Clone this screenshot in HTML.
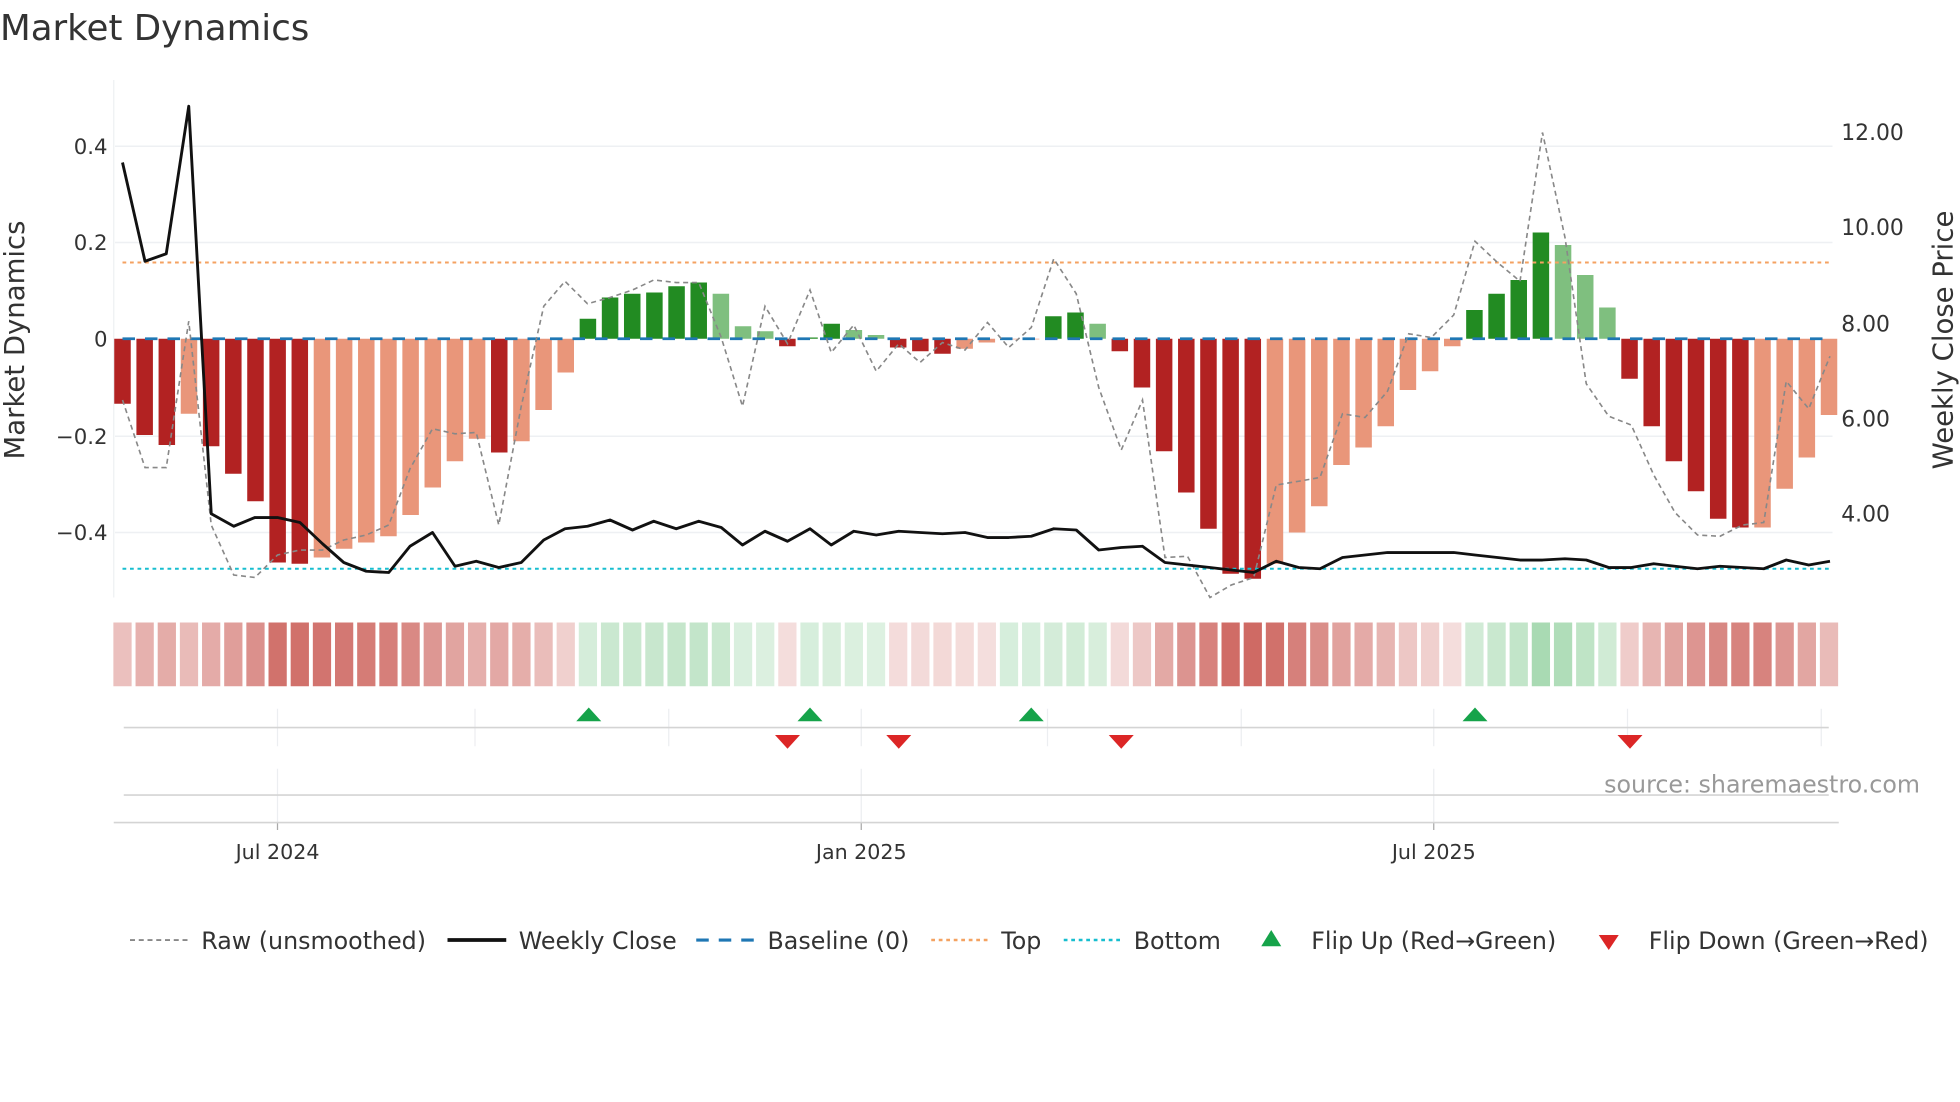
<!DOCTYPE html>
<html><head><meta charset="utf-8"><style>
html,body{margin:0;padding:0;background:#fff;}
svg{display:block;font-family:"DejaVu Sans","Liberation Sans",sans-serif;}
</style></head><body>
<svg id="s" width="1960" height="1102" viewBox="0 0 1568 881.6" xmlns="http://www.w3.org/2000/svg">
<rect width="1568" height="882" fill="#fff"/>
<text x="0" y="32" font-size="28.5" fill="#333">Market Dynamics</text>
<g id="grid"></g>
<g id="bars"></g>
<g id="lines"></g>
<g id="heat"></g>
<g id="flip"></g>
<text x="19" y="272" font-size="22" fill="#333" text-anchor="middle" transform="rotate(-90 19 272)">Market Dynamics</text>
<text x="1562" y="272" font-size="22" fill="#333" text-anchor="middle" transform="rotate(-90 1562 272)">Weekly Close Price</text>
<g font-size="17" fill="#333" text-anchor="end">
<text x="86" y="123">0.4</text><text x="86" y="200">0.2</text><text x="86" y="277">0</text>
<text x="86" y="355">−0.2</text><text x="86" y="432">−0.4</text>
</g>
<g font-size="17.5" fill="#333">
<text x="1473" y="112">12.00</text><text x="1473" y="188">10.00</text><text x="1473" y="265">8.00</text>
<text x="1473" y="341">6.00</text><text x="1473" y="417">4.00</text>
</g>
<g font-size="16.5" fill="#333" text-anchor="middle">
<text x="222" y="687">Jul 2024</text><text x="689" y="687">Jan 2025</text><text x="1147" y="687">Jul 2025</text>
</g>
<text x="1536" y="634" font-size="19" fill="#999" text-anchor="end">source: sharemaestro.com</text>
<g font-size="19" fill="#333">
<line x1="104" y1="752" x2="150" y2="752" stroke="#888" stroke-width="1.5" stroke-dasharray="4,3"/>
<text x="161" y="759">Raw (unsmoothed)</text>
<line x1="358" y1="752" x2="405" y2="752" stroke="#111" stroke-width="3"/>
<text x="415" y="759">Weekly Close</text>
<line x1="557" y1="752" x2="603" y2="752" stroke="#1f77b4" stroke-width="2.5" stroke-dasharray="10,8"/>
<text x="614" y="759">Baseline (0)</text>
<line x1="745" y1="752" x2="791" y2="752" stroke="#f4a261" stroke-width="2" stroke-dasharray="3,3"/>
<text x="801" y="759">Top</text>
<line x1="851" y1="752" x2="897" y2="752" stroke="#17becf" stroke-width="2" stroke-dasharray="3,3"/>
<text x="907" y="759">Bottom</text>
<polygon points="1009,757 1017,744 1025,757" fill="#16a34a"/>
<text x="1049" y="759">Flip Up (Red→Green)</text>
<polygon points="1279,748 1295,748 1287,760" fill="#dc2626"/>
<text x="1319" y="759">Flip Down (Green→Red)</text>
</g>
</svg>
<script>
var NS="http://www.w3.org/2000/svg";
function el(p,t,a){var e=document.createElementNS(NS,t);for(var k in a)e.setAttribute(k,a[k]);document.getElementById(p).appendChild(e);return e;}
var X0=98,S=17.73,Z=271,U=385;
var ends=[323,348,356,331,357,379,401,450,451,446,439,434,429,412,390,369,351,362,353,328,298,255,238,235,234,229,226,235,261,265,277,270,259,264,268,278,281,283,279,274,271,271,253,250,259,281,310,361,394,423,459,463,451,426,405,372,358,341,312,297,277,248,235,224,186,196,220,246,303,341,369,393,415,422,422,391,366,332];
var dark=[1,1,1,0,1,1,1,1,1,0,0,0,0,0,0,0,0,1,0,0,0,1,1,1,1,1,1,0,0,0,1,1,1,0,0,1,1,1,0,0,0,0,1,1,0,1,1,1,1,1,1,1,0,0,0,0,0,0,0,0,0,1,1,1,1,0,0,0,1,1,1,1,1,1,0,0,0,0];
[117,194,349,426].forEach(function(y){el("grid","line",{x1:92,x2:1466,y1:y,y2:y,stroke:"#eef0f3","stroke-width":1.2});});
el("grid","line",{x1:91,x2:91,y1:64,y2:478,stroke:"#eef0f3","stroke-width":1});
for(var i=0;i<78;i++){
 var x=X0+S*i,e=ends[i],v=(Z-e)/U,pos=e<Z;
 var col=pos?(dark[i]?"#228b22":"#7fbf7f"):(dark[i]?"#b22222":"#e9967a");
 var y=Math.min(e,Z),h=Math.max(Math.abs(e-Z),0.5);
 el("bars","rect",{x:x-6.6,y:y,width:13.2,height:h,fill:col});
 var a=Math.min(0.9,0.18+1.4*Math.abs(v));
 var hc=pos?"rgba(80,180,100,"+Math.min(a,0.6)+")":"rgba(200,85,78,"+a+")";
 if(Math.abs(e-Z)<1.5) hc="rgba(120,200,140,0.3)";
 el("heat","rect",{x:x-7.3,y:498,width:14.6,height:51,fill:hc});
}
var close=[[98,130],[116,209],[133,203],[151,85],[169,411],[187,421],[204,414],[222,414],[240,418],[258,435],[275,450],[293,457],[311,458],[328,437],[346,426],[364,453],[381,449],[399,454],[417,450],[435,432],[452,423],[470,421],[488,416],[506,424],[523,417],[541,423],[559,417],[577,422],[594,436],[612,425],[630,433],[648,423],[665,436],[683,425],[701,428],[719,425],[736,426],[754,427],[772,426],[790,430],[807,430],[825,429],[843,423],[861,424],[879,440],[897,438],[914,437],[932,450],[950,452],[968,454],[985,456],[1003,458],[1021,449],[1039,454],[1056,455],[1074,446],[1092,444],[1110,442],[1127,442],[1145,442],[1163,442],[1180,444],[1198,446],[1216,448],[1234,448],[1252,447],[1269,448],[1287,454],[1305,454],[1323,451],[1340,453],[1358,455],[1376,453],[1394,454],[1411,455],[1429,448],[1447,452],[1464,449]];
var raw=[[98,320],[116,374],[133,374],[151,257],[169,420],[187,460],[204,462],[222,444],[240,440],[258,440],[275,432],[293,428],[311,420],[328,375],[346,343],[364,347],[381,346],[399,420],[417,325],[435,245],[452,225],[470,243],[488,238],[506,232],[523,224],[541,226],[559,226],[577,270],[594,325],[612,245],[630,275],[648,232],[665,282],[683,260],[701,297],[719,275],[736,290],[754,274],[772,280],[790,258],[807,278],[825,262],[843,207],[861,235],[879,310],[897,360],[914,320],[932,446],[950,445],[968,478],[985,468],[1003,462],[1021,388],[1039,385],[1056,382],[1074,331],[1092,334],[1110,313],[1127,267],[1145,270],[1163,252],[1180,193],[1198,210],[1216,225],[1234,106],[1252,190],[1269,307],[1287,333],[1305,340],[1323,380],[1340,410],[1358,428],[1376,429],[1394,420],[1411,418],[1429,305],[1447,327],[1464,285]];
function pts(a){return a.map(function(p){return p[0]+","+p[1];}).join(" ");}
el("lines","line",{x1:98,x2:1464,y1:210,y2:210,stroke:"#f4a261","stroke-width":1.6,"stroke-dasharray":"3,3"});
el("lines","line",{x1:98,x2:1464,y1:455,y2:455,stroke:"#17becf","stroke-width":1.6,"stroke-dasharray":"3,3"});
el("lines","line",{x1:98,x2:1464,y1:271,y2:271,stroke:"#1f77b4","stroke-width":2.2,"stroke-dasharray":"10,8"});
el("lines","polyline",{points:pts(raw),fill:"none",stroke:"#888","stroke-width":1.3,"stroke-dasharray":"4,3"});
el("lines","polyline",{points:pts(close),fill:"none",stroke:"#111","stroke-width":2.3,"stroke-linejoin":"round"});
[222,380,535,689,838,993,1147,1302,1457].forEach(function(x){el("flip","line",{x1:x,x2:x,y1:567,y2:597,stroke:"#eceef1","stroke-width":1});});
[222,689,1147].forEach(function(x){el("flip","line",{x1:x,x2:x,y1:615,y2:658,stroke:"#eceef1","stroke-width":1});el("flip","line",{x1:x,x2:x,y1:658,y2:664,stroke:"#aaa","stroke-width":1});});
el("flip","line",{x1:99,x2:1463,y1:582,y2:582,stroke:"#d4d4d4","stroke-width":1.3});
el("flip","line",{x1:99,x2:1463,y1:636,y2:636,stroke:"#d4d4d4","stroke-width":1.3});
el("flip","line",{x1:91,x2:1471,y1:658,y2:658,stroke:"#d4d4d4","stroke-width":1.3});
[471,648,825,1180].forEach(function(x){el("flip","polygon",{points:(x-10)+",577 "+x+",566 "+(x+10)+",577",fill:"#16a34a"});});
[630,719,897,1304].forEach(function(x){el("flip","polygon",{points:(x-10)+",588 "+(x+10)+",588 "+x+",599",fill:"#dc2626"});});
</script>
</body></html>
